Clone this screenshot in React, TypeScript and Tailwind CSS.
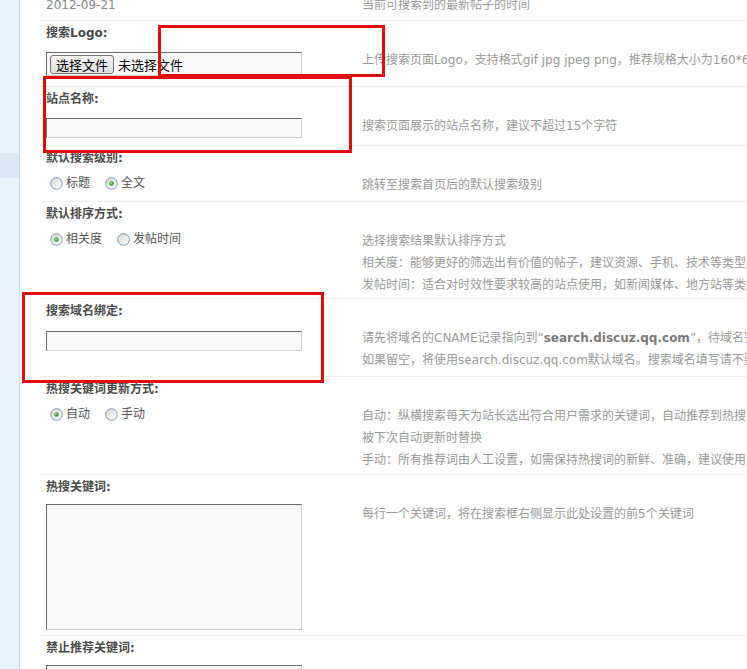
import type { ReactNode } from 'react';

// Discuz-style admin settings table (纵横搜索 settings), clipped to the window

function Radio({ checked, label }: { checked?: boolean; label: string }) {
  return (
    <span className="flex items-center mr-[15px]">
      <svg width="13" height="13" viewBox="0 0 13 13" className="shrink-0">
        <defs>
          <linearGradient id="radioFill" x1="0" y1="0" x2="1" y2="1">
            <stop offset="0" stopColor="#d6d6d0" />
            <stop offset="1" stopColor="#ffffff" />
          </linearGradient>
        </defs>
        <circle cx="6.5" cy="6.5" r="5.8" fill="url(#radioFill)" stroke="#7d97b2" strokeWidth="1" />
        {checked && <circle cx="6.5" cy="6.5" r="2.3" fill="#3d9f3d" />}
        {checked && <circle cx="6" cy="6" r="0.9" fill="#a6dca6" />}
      </svg>
      <span className="ml-[3px] text-[#555]">{label}</span>
    </span>
  );
}

function TextBox({ className }: { className: string }) {
  return (
    <div
      className={`w-[256px] border border-t-[#6b6b6b] border-l-[#6b6b6b] border-r-[#cfcfcf] border-b-[#cfcfcf] bg-[#f9f9f9] ${className}`}
    />
  );
}

interface SettingProps {
  label: string;
  rowClass: string;
  leftClass?: string;
  children?: ReactNode;
  tips?: ReactNode;
}

function Setting({ label, rowClass, leftClass = '', children, tips }: SettingProps) {
  return (
    <div className="border-t border-[#eeeeee]">
      <div className="h-[28px] pl-[6px] pt-[4px] leading-[16px] font-bold text-[#4a4a4a]">{label}</div>
      <div className={`flex ${rowClass}`}>
        <div className={`w-[316px] shrink-0 pl-[6px] ${leftClass}`}>{children}</div>
        <div className="pl-[6px] leading-[22px] text-[#999] whitespace-nowrap">{tips}</div>
      </div>
    </div>
  );
}

export default function App() {
  return (
    <div className="w-[747px] h-[669px] overflow-hidden flex bg-white text-[12px] font-['DejaVu_Sans','Noto_Sans_CJK_SC',sans-serif]">
      {/* left menu strip */}
      <div className="w-[20px] shrink-0 flex flex-col bg-[#eaf2fa] border-r border-[#c7d9eb]">
        <div className="h-[153px]" />
        <div className="h-[25px] bg-[#dae7f4]" />
      </div>

      <div className="relative flex-1 min-w-0 overflow-hidden pl-[20px]">
        {/* first row, cut off by the top of the window */}
        <div className="h-[20px] overflow-hidden">
          <div className="flex mt-[-6px]">
            <div className="w-[316px] shrink-0 pl-[6px] leading-[22px] text-[#888]">2012-09-21</div>
            <div className="pl-[6px] leading-[22px] text-[#999] whitespace-nowrap">当前可搜索到的最新帖子的时间</div>
          </div>
        </div>

        <Setting
          label="搜索Logo:"
          rowClass="h-[37px]"
          leftClass="pt-[3px]"
          tips="上传搜索页面Logo，支持格式gif jpg jpeg png，推荐规格大小为160*60"
        >
          <div className="w-[256px] h-[24px] flex items-center border border-t-[#6b6b6b] border-l-[#6b6b6b] border-r-[#cfcfcf] border-b-[#cfcfcf] bg-[#f9f9f9] pl-[3px] text-[13px] font-['Noto_Sans_CJK_SC',sans-serif] text-black">
            <span className="h-[19px] px-[5px] flex items-center rounded-[3px] border border-[#707070] bg-gradient-to-b from-[#f6f6f6] to-[#dedede] leading-none">
              选择文件
            </span>
            <span className="ml-[4px] leading-none">未选择文件</span>
          </div>
        </Setting>

        <Setting
          label="站点名称:"
          rowClass="h-[30px]"
          leftClass="pt-[3px]"
          tips="搜索页面展示的站点名称，建议不超过15个字符"
        >
          <TextBox className="h-[20px]" />
        </Setting>

        <Setting label="默认搜索级别:" rowClass="h-[27px]" tips="跳转至搜索首页后的默认搜索级别">
          <div className="flex h-[18px] pl-[4px]">
            <Radio label="标题" />
            <Radio checked label="全文" />
          </div>
        </Setting>

        <Setting
          label="默认排序方式:"
          rowClass="h-[68px]"
          tips={
            <>
              <div>选择搜索结果默认排序方式</div>
              <div>相关度：能够更好的筛选出有价值的帖子，建议资源、手机、技术等类型的站点使用</div>
              <div>发帖时间：适合对时效性要求较高的站点使用，如新闻媒体、地方站等类型的站点</div>
            </>
          }
        >
          <div className="flex h-[18px] pl-[4px]">
            <Radio checked label="相关度" />
            <Radio label="发帖时间" />
          </div>
        </Setting>

        <Setting
          label="搜索域名绑定:"
          rowClass="h-[49px]"
          leftClass="pt-[4px]"
          tips={
            <>
              <div>
                请先将域名的CNAME记录指向到“<b className="text-[#7a7a7a]">search.discuz.qq.com</b>”，待域名完全生效后再填写此项
              </div>
              <div>如果留空，将使用search.discuz.qq.com默认域名。搜索域名填写请不要带http://</div>
            </>
          }
        >
          <TextBox className="h-[20px]" />
        </Setting>

        <Setting
          label="热搜关键词更新方式:"
          rowClass="h-[69px]"
          tips={
            <>
              <div>自动：纵横搜索每天为站长选出符合用户需求的关键词，自动推荐到热搜词中，您手动修改的热搜词会</div>
              <div>被下次自动更新时替换</div>
              <div>手动：所有推荐词由人工设置，如需保持热搜词的新鲜、准确，建议使用自动方式</div>
            </>
          }
        >
          <div className="flex h-[18px] pl-[4px]">
            <Radio checked label="自动" />
            <Radio label="手动" />
          </div>
        </Setting>

        <Setting
          label="热搜关键词:"
          rowClass="h-[132px]"
          leftClass="pt-[1px]"
          tips="每行一个关键词，将在搜索框右侧显示此处设置的前5个关键词"
        >
          <TextBox className="h-[126px]" />
        </Setting>

        <Setting label="禁止推荐关键词:" rowClass="h-[132px]" leftClass="pt-[1px]">
          <TextBox className="h-[126px]" />
        </Setting>

        {/* red annotation boxes drawn over the screenshot */}
        <div className="absolute left-[138px] top-[25px] w-[227px] h-[52px] border-[3px] border-[#e00d0d]" />
        <div className="absolute left-[23px] top-[76px] w-[309px] h-[77px] border-[3px] border-[#e00d0d]" />
        <div className="absolute left-[2px] top-[292px] w-[302px] h-[91px] border-[3px] border-[#e00d0d]" />
      </div>
    </div>
  );
}
